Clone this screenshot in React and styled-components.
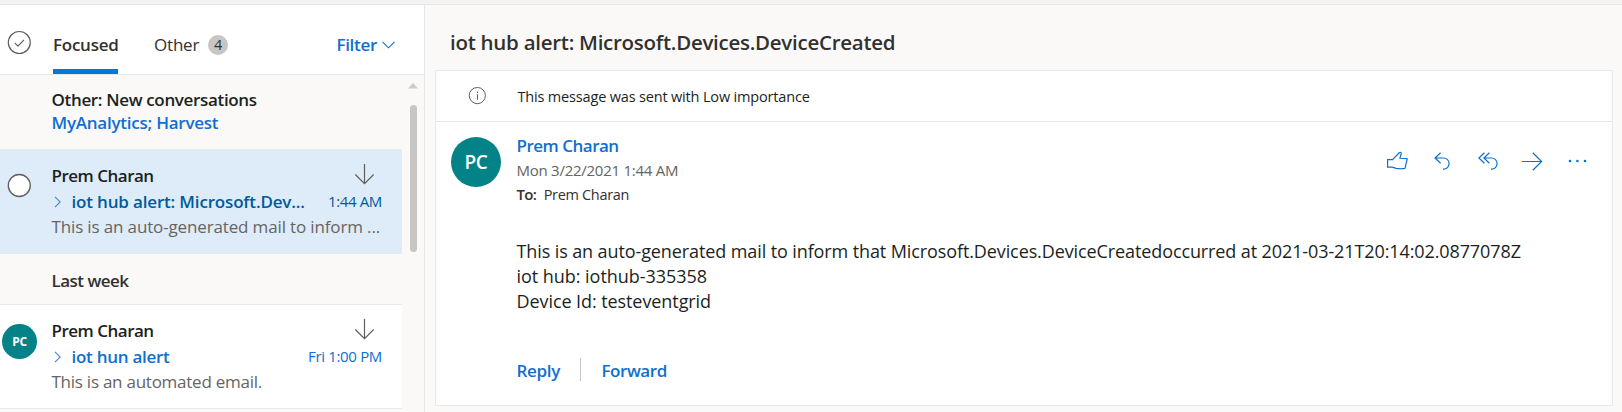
import React from "react";
import styled, { createGlobalStyle } from "styled-components";

const GlobalStyle = createGlobalStyle`
  * { box-sizing: border-box; }
  body {
    margin: 0;
    overflow: hidden;
    background: #faf9f8;
    font-family: "Open Sans", "Noto Sans", sans-serif;
    color: #201f1e;
  }
  svg { display: block; flex: none; }
`;

const Page = styled.div`
  display: flex;
  flex-direction: column;
  height: 412px;
  overflow: hidden;
`;

const TopEdge = styled.div`
  flex: none;
  height: 5px;
  background: #f3f2f1;
  border-bottom: 1px solid #e8e6e4;
`;

const Panes = styled.main`
  display: flex;
  flex: 1;
  min-height: 0;
`;

const ListPane = styled.section`
  display: flex;
  flex-direction: column;
  flex: none;
  width: 425px;
  border-right: 1px solid #e6e6e6;
`;

const Text = styled.span`
  font-size: ${(p) => p.$size || 17}px;
  font-weight: ${(p) => p.$weight || 400};
  letter-spacing: ${(p) => p.$track || 0}px;
  color: ${(p) => p.$color || "inherit"};
  white-space: nowrap;
`;

const PivotBar = styled.header`
  display: flex;
  flex: none;
  height: 70px;
  padding-left: 7px;
  background: #fff;
  border-bottom: 1px solid #e6e6e6;
`;

const SelectAll = styled.div`
  width: 46px;
  padding-top: 25px;
`;

const Tab = styled.div`
  display: flex;
  align-items: center;
  gap: 9px;
  height: 69px;
  width: ${(p) => p.$width}px;
  margin-right: 36px;
  padding-top: 15px;
  border-bottom: 5px solid ${(p) => (p.$active ? "#0078d4" : "transparent")};
`;

const Badge = styled.span`
  display: flex;
  align-items: center;
  justify-content: center;
  flex: none;
  width: 20px;
  height: 20px;
  border-radius: 50%;
  background: #c8c6c4;
  color: #323130;
  font-size: 14.5px;
  line-height: 20px;
`;

const FilterButton = styled.div`
  display: flex;
  align-items: center;
  gap: 5px;
  height: 69px;
  margin-left: auto;
  padding: 10px 29px 0 0;
`;

const ListBody = styled.div`
  display: flex;
  flex: 1;
  min-height: 0;
  overflow: hidden;
`;

const Messages = styled.div`
  width: 402px;
  flex: none;
`;

const OtherSummary = styled.div`
  display: flex;
  flex-direction: column;
  height: 74px;
  padding: 13px 0 0 51.5px;
  line-height: 23px;
`;

const MessageRow = styled.article`
  display: flex;
  height: 105px;
  background: ${(p) => (p.$selected ? "#deecf9" : "#fff")};
  border-top: 1px solid ${(p) => (p.$selected ? "#e8eaee" : "#edebe9")};
  border-bottom: 1px solid ${(p) => (p.$selected ? "#e8eaee" : "#edebe9")};
`;

const Persona = styled.div`
  display: flex;
  flex: none;
  width: 51.5px;
  padding: ${(p) => p.$pad};
`;

const Avatar = styled.div`
  display: flex;
  align-items: center;
  justify-content: center;
  flex: none;
  width: ${(p) => p.$size}px;
  height: ${(p) => p.$size}px;
  border-radius: 50%;
  background: #038387;
  color: #fff;
  font-size: ${(p) => p.$font}px;
  font-weight: ${(p) => p.$weight || 600};
  letter-spacing: -0.3px;
`;

const Summary = styled.div`
  flex: 1;
  padding: 13px 20px 0 0;
`;

const SummaryLine = styled.div`
  display: flex;
  justify-content: space-between;
  height: ${(p) => p.$height || 25}px;
  line-height: ${(p) => p.$height || 25}px;
`;

const ArrowSlot = styled.div`
  padding: 1px 8px 0 0;
`;

const Subject = styled.div`
  display: flex;
  align-items: center;
  gap: 9.5px;
  padding-left: 2.5px;
`;

const GroupHeader = styled.div`
  height: 50px;
  padding: 14px 0 0 51.5px;
  line-height: 25px;
`;

const Scrollbar = styled.div`
  display: flex;
  flex-direction: column;
  align-items: center;
  width: 22px;
  padding: 8px 0 0;
`;

const Thumb = styled.div`
  width: 7px;
  height: 147px;
  margin-top: 16px;
  border-radius: 4px;
  background: #c8c6c4;
`;

const ReadingPane = styled.section`
  flex: 1;
  min-width: 0;
  padding: 0 9px 0 10px;
`;

const SubjectHeading = styled.h1`
  display: flex;
  align-items: center;
  height: 65px;
  margin: 0;
  padding: 8px 0 0 15px;
  color: #323130;
`;

const Card = styled.div`
  height: 336px;
  background: #fff;
  border: 1px solid #e8e8e8;
  border-radius: 2px;
`;

const InfoBar = styled.div`
  display: flex;
  align-items: center;
  height: 51px;
  padding-left: 32px;
  gap: 31.5px;
  border-bottom: 1px solid #e8e8e8;
`;

const Message = styled.div`
  display: flex;
  padding-left: 15px;
`;

const AvatarSlot = styled.div`
  width: 65.5px;
  padding-top: 15px;
`;

const MessageContent = styled.div`
  flex: 1;
  padding-top: 12px;
`;

const MessageHead = styled.div`
  display: flex;
  justify-content: space-between;
`;

const SenderLines = styled.div`
  display: flex;
  flex-direction: column;
  line-height: 24px;
`;

const Recipients = styled.div`
  display: flex;
  align-items: baseline;
  gap: 7.5px;
  height: 24px;
`;

const Actions = styled.div`
  display: grid;
  grid-template-columns: 48px 44px 44px 46px 20px;
  align-items: center;
  height: 22px;
  margin: 16px 24px 0 0;
`;

const Body = styled.div`
  display: flex;
  flex-direction: column;
  margin-top: 33px;
  line-height: 25px;
`;

const Footer = styled.div`
  display: flex;
  height: 23px;
  margin-top: 44px;
  line-height: 25px;
`;

const ReplyCell = styled.div`
  width: 64.5px;
  border-right: 1px solid #c8c6c4;
`;

const ForwardCell = styled.div`
  padding-left: 20.5px;
`;

const Stroke = ({ w, h, color = "#0f6fd0", width = 1.2, children }) => (
  <svg width={w} height={h} viewBox={`0 0 ${w} ${h}`} fill="none" stroke={color} strokeWidth={width}>
    {children}
  </svg>
);

const CircleCheck = () => (
  <Stroke w={25} h={25} color="#605e5c">
    <circle cx="12.3" cy="12.5" r="11" />
    <path d="M7.8 12.9l3.2 3.2 6-6.2" />
  </Stroke>
);

const EmptyCircle = () => (
  <Stroke w={25} h={25} color="#605e5c" width={1.3}>
    <circle cx="12.3" cy="12.5" r="11" fill="#fff" />
  </Stroke>
);

const ChevronDown = () => (
  <Stroke w={13} h={8} width={1.1}>
    <path d="M0.5 0.8l6 6 6-6" />
  </Stroke>
);

const ChevronRight = () => (
  <Stroke w={8} h={12} color="#4a86d8" width={1.1}>
    <path d="M1 0.8l5.2 5.2L1 11.2" />
  </Stroke>
);

const LowImportance = () => (
  <ArrowSlot>
    <Stroke w={20} h={21} color="#605e5c">
      <path d="M10.5 0v19.5M1.3 10.5l9.2 9.2 9.2-9.2" />
    </Stroke>
  </ArrowSlot>
);

const InfoIcon = () => (
  <Stroke w={18} h={18} color="#605e5c" width={1}>
    <circle cx="9.3" cy="8.6" r="8.1" />
    <path d="M9.5 7.3v5.4M9.5 4.6v1.4" />
  </Stroke>
);

const LikeIcon = () => (
  <Stroke w={22} h={20}>
    <path d="M1.6 16.2V8.6h4.9l6.8-6.8c1-.9 2.2-.4 1.9.9l-1.3 4.6 7.3.4-2.2 9.6c-2.9.6-6.2.5-8.8 0L6.2 16.1z" />
  </Stroke>
);

const ReplyIcon = () => (
  <Stroke w={16} h={18}>
    <path d="M6.6 0.8L1 6l5.6 5.2M1 6h8.5a5.6 5.6 0 0 1 0 11.2H9" />
  </Stroke>
);

const ReplyAllIcon = () => (
  <Stroke w={20} h={18}>
    <path d="M6.4 0.8L0.9 6l5.5 5.2M11.4 0.8L5.9 6l5.5 5.2M5.9 6h7.6a5.6 5.6 0 0 1 0 11.2H13" />
  </Stroke>
);

const ForwardIcon = () => (
  <Stroke w={21} h={19}>
    <path d="M0 9.5h19.5M10.8 0.8l8.8 8.7-8.8 8.7" />
  </Stroke>
);

const MoreIcon = () => (
  <svg width="20" height="4" viewBox="0 0 20 4" fill="#0078d4">
    <circle cx="2" cy="2" r="1.3" />
    <circle cx="9.4" cy="2" r="1.3" />
    <circle cx="17" cy="2" r="1.3" />
  </svg>
);

const ScrollUp = () => (
  <svg width="10" height="6" viewBox="0 0 10 6" fill="#c8cdd0">
    <path d="M0 5.5L5 0l5 5.5z" />
  </svg>
);

const BLUE = "#0f6fd0";
const DEEP_BLUE = "#005a9e";
const GREY = "#666462";

export default function App() {
  return (
    <Page>
      <GlobalStyle />
      <TopEdge />
      <Panes>
        <ListPane>
          <PivotBar>
            <SelectAll><CircleCheck /></SelectAll>
            <Tab $active $width={65}>
              <Text $weight={600} $track={-0.25} $color="#323130">Focused</Text>
            </Tab>
            <Tab $width={75}>
              <Text $track={-0.2} $color="#323130">Other</Text>
              <Badge>4</Badge>
            </Tab>
            <FilterButton>
              <Text $weight={600} $track={-0.3} $color={BLUE}>Filter</Text>
              <ChevronDown />
            </FilterButton>
          </PivotBar>
          <ListBody>
            <Messages>
              <OtherSummary>
                <Text $weight={600} $track={-0.34}>Other: New conversations</Text>
                <Text $weight={600} $track={-0.24} $color={BLUE}>MyAnalytics; Harvest</Text>
              </OtherSummary>
              <MessageRow $selected>
                <Persona $pad="23px 0 0 7px"><EmptyCircle /></Persona>
                <Summary>
                  <SummaryLine $height={26}>
                    <Text $weight={600} $track={-0.5}>Prem Charan</Text>
                    <LowImportance />
                  </SummaryLine>
                  <SummaryLine>
                    <Subject>
                      <ChevronRight />
                      <Text $weight={600} $track={-0.17} $color={DEEP_BLUE}>iot hub alert: Microsoft.Dev...</Text>
                    </Subject>
                    <Text $size={15} $track={-0.35} $color={DEEP_BLUE}>1:44 AM</Text>
                  </SummaryLine>
                  <SummaryLine>
                    <Text $track={-0.145} $color={GREY}>This is an auto-generated mail to inform ...</Text>
                  </SummaryLine>
                </Summary>
              </MessageRow>
              <GroupHeader>
                <Text $weight={600} $track={-0.52} $color="#323130">Last week</Text>
              </GroupHeader>
              <MessageRow>
                <Persona $pad="19px 0 0 2px"><Avatar $size={35} $font={12} $weight={700}>PC</Avatar></Persona>
                <Summary>
                  <SummaryLine $height={26}>
                    <Text $weight={600} $track={-0.5}>Prem Charan</Text>
                    <LowImportance />
                  </SummaryLine>
                  <SummaryLine>
                    <Subject>
                      <ChevronRight />
                      <Text $weight={600} $track={-0.27} $color={BLUE}>iot hun alert</Text>
                    </Subject>
                    <Text $size={15} $track={-0.33} $color={BLUE}>Fri 1:00 PM</Text>
                  </SummaryLine>
                  <SummaryLine>
                    <Text $track={-0.25} $color={GREY}>This is an automated email.</Text>
                  </SummaryLine>
                </Summary>
              </MessageRow>
            </Messages>
            <Scrollbar>
              <ScrollUp />
              <Thumb />
            </Scrollbar>
          </ListBody>
        </ListPane>
        <ReadingPane>
          <SubjectHeading>
            <Text $size={20.5} $weight={600} $track={-0.27}>iot hub alert: Microsoft.Devices.DeviceCreated</Text>
          </SubjectHeading>
          <Card>
            <InfoBar>
              <InfoIcon />
              <Text $size={14.5} $track={-0.17}>This message was sent with Low importance</Text>
            </InfoBar>
            <Message>
              <AvatarSlot><Avatar $size={50} $font={19}>PC</Avatar></AvatarSlot>
              <MessageContent>
                <MessageHead>
                  <SenderLines>
                    <Text $weight={600} $track={-0.5} $color={BLUE}>Prem Charan</Text>
                    <Text $size={15} $track={-0.26} $color={GREY}>Mon 3/22/2021 1:44 AM</Text>
                    <Recipients>
                      <Text $size={15} $weight={600} $track={-0.7} $color="#323130">To:</Text>
                      <Text $size={14.5} $track={-0.32} $color="#323130">Prem Charan</Text>
                    </Recipients>
                  </SenderLines>
                  <Actions>
                    <LikeIcon />
                    <ReplyIcon />
                    <ReplyAllIcon />
                    <ForwardIcon />
                    <MoreIcon />
                  </Actions>
                </MessageHead>
                <Body>
                  <Text $size={18} $track={-0.104}>
                    This is an auto-generated mail to inform that Microsoft.Devices.DeviceCreatedoccurred at 2021-03-21T20:14:02.0877078Z
                  </Text>
                  <Text $size={18} $track={-0.04}>iot hub: iothub-335358</Text>
                  <Text $size={18} $track={-0.08}>Device Id: testeventgrid</Text>
                </Body>
                <Footer>
                  <ReplyCell><Text $weight={600} $track={-0.3} $color={BLUE}>Reply</Text></ReplyCell>
                  <ForwardCell><Text $weight={600} $track={-0.45} $color={BLUE}>Forward</Text></ForwardCell>
                </Footer>
              </MessageContent>
            </Message>
          </Card>
        </ReadingPane>
      </Panes>
    </Page>
  );
}
